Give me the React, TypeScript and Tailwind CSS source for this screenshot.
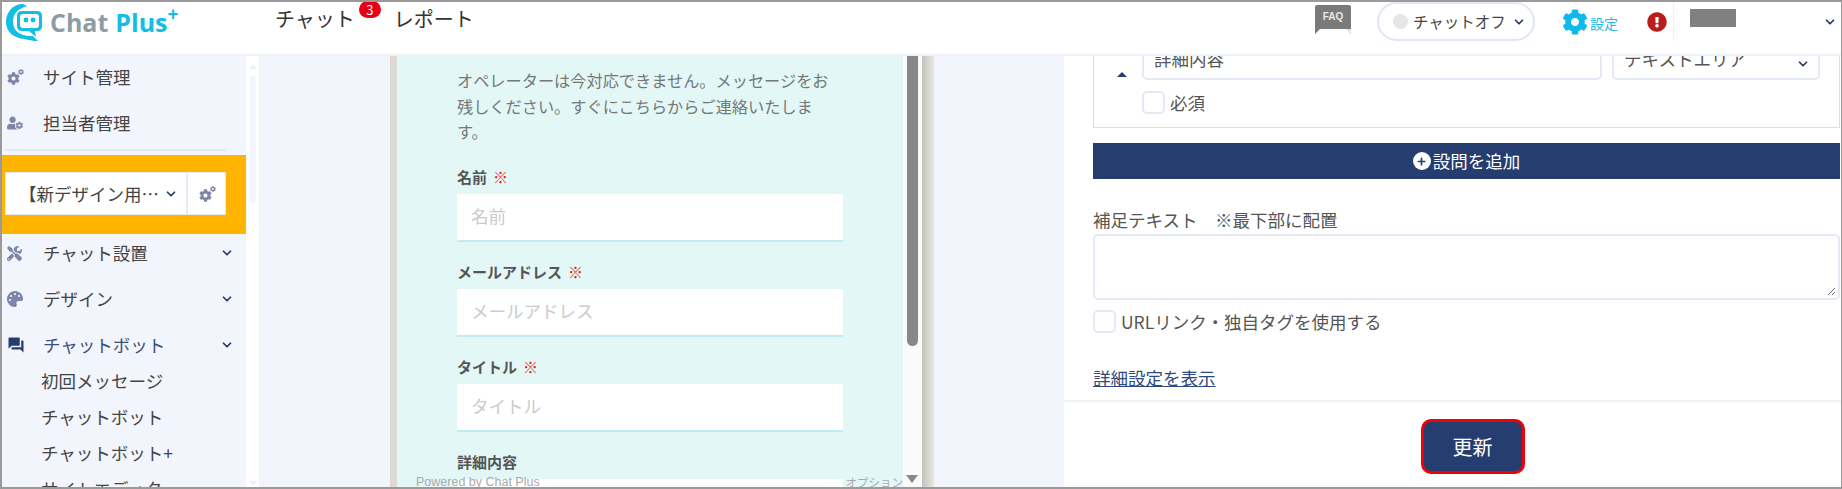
import { ChevronDown } from "lucide-react";
import {
  FaCog,
  FaExclamationCircle,
  FaPalette,
  FaPlus,
  FaTools,
  FaUserCog,
} from "react-icons/fa";
import { MdQuestionAnswer } from "react-icons/md";

const Chevron = ({ className = "" }: { className?: string }) => (
  <ChevronDown size={14} strokeWidth={3} className={"shrink-0 text-[#27375f] " + className} />
);

// big cog with a little one at its upper right
const Cogs = () => (
  <span className="relative block h-[16px] w-[17px] text-[#7d86a8]">
    <FaCog size={13} className="absolute bottom-0 left-0" />
    <FaCog size={6} className="absolute top-0 right-0" />
  </span>
);

const Logo = () => (
  <div className="flex items-start">
    <svg width="38" height="38" viewBox="0 0 38 38" className="mt-px shrink-0">
      <path d="M18 1 C8 1 1 9 1 19 C1 29 9 35 19 36 L34 39 L28 33 C16 34 8 28 8 19 C8 11 12 6 22 3 Z" fill="#12bde6" />
      <path d="M17 8 H32 Q37 8 37 13 V23 Q37 28 32 28 H30 L31 34 L24 28 H17 Q12 28 12 23 V13 Q12 8 17 8 Z" fill="#12bde6" />
      <rect x="15" y="11" width="19" height="14" rx="3" fill="#fff" />
      <circle cx="21" cy="17" r="2.4" fill="#12bde6" />
      <circle cx="28" cy="17" r="2.4" fill="#12bde6" />
    </svg>
    <div className="ml-[7px] mt-[3px] flex items-start font-['Open_Sans',sans-serif] text-[25px] leading-[34px] font-bold">
      <span className="text-[#8f9ca3]">Chat</span>
      <span className="ml-[7px] text-[#12bde6]">Plus</span>
      <span className="-mt-[8px] text-[19px] text-[#12bde6]">+</span>
    </div>
  </div>
);

const FaqIcon = () => (
  <svg width="38" height="30" viewBox="0 0 38 30" className="shrink-0">
    <path d="M3 0 H35 Q37 0 37 2 V29 L33 24 H6 L1 29 V2 Q1 0 3 0 Z" fill="#7a7a78" />
    <path d="M33 24 L37 24 L37 29 Z" fill="#e7e5df" />
    <text x="19" y="15" textAnchor="middle" fontSize="10" fontWeight="700" fill="#e8e8e8" fontFamily="Liberation Sans, sans-serif">
      FAQ
    </text>
  </svg>
);

const Header = () => (
  <header className="flex h-[54px] shrink-0 items-start border-b-2 border-[#eff2f9] bg-white">
    <div className="ml-[3px] w-[270px]">
      <Logo />
    </div>
    <div className="relative mt-[2px] text-[20px] leading-[30px] text-[#333]">
      チャット
      <span className="absolute -top-[3px] -right-[26px] flex h-[17px] w-[22px] items-center justify-center rounded-full bg-[#e60012] text-[13px] leading-none text-white">
        3
      </span>
    </div>
    <div className="ml-[39px] mt-[2px] text-[20px] leading-[30px] text-[#333]">レポート</div>
    <div className="ml-auto flex items-start pr-[4px]">
      <div className="mt-[3px]">
        <FaqIcon />
      </div>
      <div className="ml-[25px] flex h-[39px] w-[158px] items-center rounded-full border-2 border-[#e0e8f5] bg-white pl-[14px]">
        <span className="h-[15px] w-[15px] rounded-full bg-[#e6e6e6]" />
        <span className="ml-[5px] text-[15.5px] leading-none text-[#444]">チャットオフ</span>
        <Chevron className="ml-[6px]" />
      </div>
      <FaCog size={26} className="ml-[27px] mt-[7px] text-[#0fb9ea]" />
      <span className="ml-[2px] mt-[11px] text-[14px] leading-[20px] text-[#20bbe9]">設定</span>
      <FaExclamationCircle size={20} className="ml-[29px] mt-[10px] text-[#b81c1c]" />
      <div className="ml-[6px] h-[39px] w-px bg-[#eef1f7]" />
      <div className="ml-[16px] mt-[7px] h-[18px] w-[46px] bg-[#808080]" />
      <ChevronDown size={14} strokeWidth={3} className="ml-[87px] mt-[13px] text-[#27375f]" />
    </div>
  </header>
);

const SideItem = ({
  icon,
  label,
  chevron,
  active,
}: {
  icon: React.ReactNode;
  label: string;
  chevron?: boolean;
  active?: boolean;
}) => (
  <div className="flex h-[46px] items-center pl-[5px] pr-[12px]">
    <span className={"flex w-[36px] " + (active ? "text-[#263d70]" : "text-[#7d86a8]")}>{icon}</span>
    <span className={"text-[17.5px] leading-none " + (active ? "text-[#3a4f80]" : "text-[#444]")}>{label}</span>
    {chevron && <Chevron className="ml-auto" />}
  </div>
);

const SubItem = ({ label }: { label: string }) => (
  <div className="flex h-[36px] items-center pl-[39px] text-[17.5px] leading-none text-[#444]">{label}</div>
);

const Sidebar = () => (
  <aside className="flex w-[257px] shrink-0 overflow-hidden bg-white">
    <div className="w-[244px] shrink-0 bg-[#f2f5fb]">
      <div className="-mt-[2px]">
        <SideItem icon={<Cogs />} label="サイト管理" />
        <SideItem icon={<FaUserCog size={16} />} label="担当者管理" />
      </div>
      <div className="ml-[3px] mt-[3px] h-[2px] w-[221px] bg-[#e4e9f5]" />
      <div className="mt-[4px] flex h-[79px] items-center bg-[#ffb500] pb-[2px] pl-[3px]">
        <div className="flex h-[43px] w-[221px] items-center border border-[#e4e9f5] bg-white">
          <div className="flex h-full w-[182px] items-center border-r-2 border-[#e4e9f5] pl-[13px] pr-[8px]">
            <span className="text-[17.5px] leading-none whitespace-nowrap text-[#444]">【新デザイン用…</span>
            <Chevron className="ml-auto" />
          </div>
          <span className="ml-[11px]">
            <Cogs />
          </span>
        </div>
      </div>
      <div className="-mt-[4px]">
        <SideItem icon={<FaTools size={15} />} label="チャット設置" chevron />
        <SideItem icon={<FaPalette size={16} />} label="デザイン" chevron />
        <SideItem icon={<MdQuestionAnswer size={18} />} label="チャットボット" chevron active />
        <div className="-mt-[5px]">
          <SubItem label="初回メッセージ" />
          <SubItem label="チャットボット" />
          <SubItem label="チャットボット+" />
          <SubItem label="サイトエディタ" />
        </div>
      </div>
    </div>
    <div className="relative w-[13px] shrink-0 bg-white">
      <div className="absolute top-[20px] left-[4px] h-[127px] w-[6px] rounded-full bg-[#f2f5fb]" />
      <div className="absolute top-[8px] left-[3px] h-0 w-0 border-x-4 border-b-[5px] border-x-transparent border-b-[#eef1f7]" />
      <div className="absolute bottom-[1px] left-[3px] h-0 w-0 border-x-4 border-t-[5px] border-x-transparent border-t-[#eef1f7]" />
    </div>
  </aside>
);

const FormField = ({ label, required }: { label: string; required?: boolean }) => (
  <div>
    <div className="flex h-[30px] items-center text-[15px] leading-none font-bold text-[#555]">
      {label}
      {required && <span className="ml-[6px] font-normal text-[#f01c1c]">※</span>}
    </div>
    <div className="mt-[2px] flex h-[48px] items-center border-b-2 border-[#c3ebf4] bg-white pb-[2px] pl-[14px] text-[17.5px] leading-none text-[#cbcbcb]">
      {label}
    </div>
  </div>
);

const Preview = () => (
  <div className="relative ml-[131px] flex w-[544px] shrink-0 overflow-hidden">
    <div className="w-[7px] shrink-0 bg-[#dcdad3]" />
    <div className="w-[506px] shrink-0 bg-[#e2f7f6] pl-[60px] pr-[60px] pt-[12px]">
      <p className="text-[16.2px] leading-[25.5px] text-[#777]">
        オペレーターは今対応できません。メッセージをお残しください。すぐにこちらからご連絡いたします。
      </p>
      <div className="mt-[17px] flex flex-col gap-[15px]">
        <FormField label="名前" required />
        <FormField label="メールアドレス" required />
        <FormField label="タイトル" required />
        <div>
          <div className="flex h-[30px] items-center text-[15px] leading-none font-bold text-[#555]">詳細内容</div>
          <div className="mt-[2px] h-[40px] bg-white" />
        </div>
      </div>
    </div>
    <div className="relative w-[19px] shrink-0 bg-[#fafafb]">
      <div className="absolute top-0 left-[4px] h-[290px] w-[11px] rounded-b-md bg-[#888]" />
      <div className="absolute right-[4px] bottom-[4px] h-0 w-0 border-x-[6px] border-t-[8px] border-x-transparent border-t-[#888]" />
    </div>
    <div className="w-[12px] shrink-0 bg-gradient-to-r from-[#c4c3bd] to-[#e8e7e1]" />
    <span className="absolute bottom-[-3px] left-[26px] text-[12.5px] leading-[16px] text-[#aaa] font-['Liberation_Sans',sans-serif]">
      Powered by Chat Plus
    </span>
    <span className="absolute right-[31px] bottom-[-3px] text-[11.5px] leading-[16px] text-[#aaa]">オプション</span>
  </div>
);

const CheckBox = () => <span className="block h-[23px] w-[23px] shrink-0 rounded-[5px] border-2 border-[#e4e9f5] bg-white" />;

const SettingsPanel = () => (
  <div className="flex min-w-0 flex-1 flex-col bg-white">
    <div className="pl-[29px] pr-[1px]">
      <div className="-mt-[6px] h-[78px] border border-t-0 border-[#dedede]">
        <div className="flex h-[30px] items-end">
          <span className="mb-[3px] ml-[23px] h-0 w-0 border-x-[5px] border-b-[5px] border-x-transparent border-b-[#263d70]" />
          <div className="ml-[15px] flex h-[29px] w-[460px] items-end overflow-hidden rounded-b-[5px] border-2 border-t-0 border-[#e4e9f5] pl-[10px]">
            <span className="mb-[4px] text-[17.5px] leading-[30px] text-[#555]">詳細内容</span>
          </div>
          <div className="ml-[10px] flex h-[29px] w-[208px] items-end overflow-hidden rounded-b-[5px] border-2 border-t-0 border-[#e4e9f5] pl-[10px] pr-[8px]">
            <span className="mb-[4px] text-[17.5px] leading-[30px] text-[#555]">テキストエリア</span>
            <Chevron className="mb-[7px] ml-auto" />
          </div>
        </div>
        <div className="mt-[11px] ml-[48px] flex items-center gap-[5px]">
          <CheckBox />
          <span className="text-[17.5px] leading-none text-[#555]">必須</span>
        </div>
      </div>
      <button className="mt-[15px] flex h-[36px] w-full items-center justify-center gap-[2px] bg-[#263d70] text-[17.5px] leading-none text-white">
        <span className="flex h-[18px] w-[18px] items-center justify-center rounded-full bg-white text-[#263d70]">
          <FaPlus size={9} />
        </span>
        設問を追加
      </button>
      <div className="mt-[29px] text-[17.5px] leading-[24px] text-[#555]">補足テキスト　※最下部に配置</div>
      <div className="relative mt-[2px] h-[66px] rounded-[5px] border-2 border-[#e4e9f5] bg-white">
        <svg width="9" height="9" viewBox="0 0 9 9" className="absolute right-[2px] bottom-[2px]">
          <path d="M8 1 L1 8 M8 5 L5 8" stroke="#666" strokeWidth="1" />
        </svg>
      </div>
      <div className="mt-[10px] flex items-center gap-[5px]">
        <CheckBox />
        <span className="text-[17.5px] leading-none text-[#555]">URLリンク・独自タグを使用する</span>
      </div>
      <a className="mt-[33px] block text-[17.5px] leading-[24px] text-[#2c4a80] underline">詳細設定を表示</a>
    </div>
    <div className="mt-[10px] flex flex-1 items-start justify-center border-t-2 border-[#eff2f9] pl-[40px] pt-[17px]">
      <button className="flex h-[55px] w-[104px] items-center justify-center rounded-[10px] border-[3px] border-[#f00008] bg-[#263d70] text-[20px] leading-none text-white">
        更新
      </button>
    </div>
  </div>
);

export default function App() {
  return (
    <div className="flex h-[489px] w-[1842px] flex-col overflow-hidden border-2 border-r-[1px] border-[#9a9a9a] bg-white font-['Noto_Sans_CJK_JP',sans-serif]">
      <Header />
      <div className="flex min-h-0 flex-1">
        <Sidebar />
        <div className="flex flex-1 overflow-hidden bg-[#f2f5fb]">
          <Preview />
          <div className="w-[130px] shrink-0" />
          <SettingsPanel />
        </div>
      </div>
    </div>
  );
}
